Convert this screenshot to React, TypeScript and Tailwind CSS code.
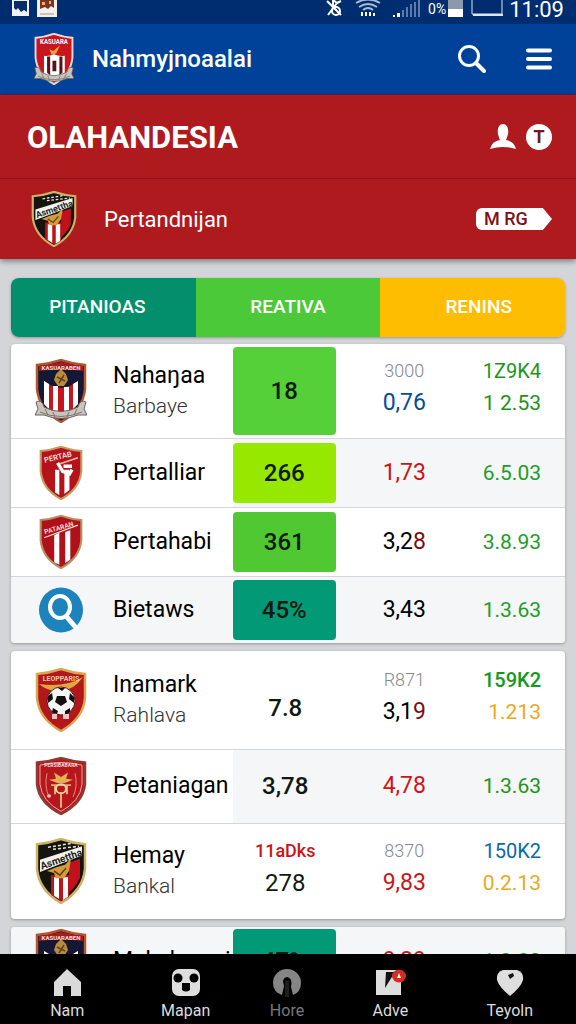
import type { ReactNode } from "react";

const SHIELD = "M2 6 Q14 5 26 1 Q38 5 50 6 L50 30 Q48 51 26 63 Q4 51 2 30 Z";

type CrestKind = "navy" | "header" | "black" | "sash" | "stripes" | "ball" | "eagle";

const crestFill: Record<CrestKind, string> = {
  navy: "#141834",
  header: "#c9151b",
  black: "#15140f",
  sash: "#b5121b",
  stripes: "#b01019",
  ball: "#b3161b",
  eagle: "#b8161d",
};

const crestEdge: Record<CrestKind, string> = {
  navy: "#b4552c",
  header: "#e9d9d2",
  black: "#cfb267",
  sash: "#c79a63",
  stripes: "#b59266",
  ball: "#d8a650",
  eagle: "#8f3b31",
};

function Ribbon() {
  return (
    <g>
      <path
        d="M1 43 Q7 40 9 48 Q26 57 43 48 Q45 40 51 43 L49 50 L52 56 L43 56 Q26 63 9 56 L0 56 L3 50 Z"
        fill="#c9c5bd"
        stroke="#68625d"
        strokeWidth="1"
      />
      <path d="M5 53 Q26 62 47 53 M10 50 L13 56 M18 53 L20 58 M34 53 L32 58 M42 50 L39 56" fill="none" stroke="#7b756f" strokeWidth="1" />
    </g>
  );
}

function CrestArt({ kind }: { kind: CrestKind }) {
  switch (kind) {
    case "navy":
      return (
        <>
          <path d="M4 7 Q14 6 26 3 Q38 6 48 7 L48 12 Q26 9 4 12 Z" fill="#a51c24" />
          <path d="M9 22 L17 27 L26 29 L35 27 L43 22 L43 45 Q37 53 26 58 Q15 53 9 45 Z" fill="#c8141d" />
          <path d="M9 22 L14 25 V50 L9 45 Z M18 27 H23 V56 L18 53 Z M29 28 H34 V53 L29 56 Z M38 25 L43 22 V45 L38 50 Z" fill="#fff" />
          <path d="M21 15 L26 10 L31 15 L33 21 L29 27 L23 27 L19 21 Z" fill="#b98b3c" />
          <path d="M22 18 L30 22 M24 24 L29 16" stroke="#60411b" strokeWidth="1.5" />
          <Ribbon />
          <text x="26" y="11" fontSize="6" fontWeight="700" textAnchor="middle" fill="#f3dedb">KASUARABEN</text>
        </>
      );
    case "header":
      return (
        <>
          <path d="M13 28 Q20 29 26 26 Q32 29 40 28 V50 Q34 55 26 58 Q18 55 13 50 Z" fill="#fff" />
          <path d="M17 29 H21 V52 L17 49 Z M24 34 H29 V47 H24 Z M33 29 H37 V49 L33 52 Z" fill="#5c1217" />
          <path d="M20 20 L25 22 L34 15 L29 25 L23 27 Z" fill="#e4a23a" />
          <Ribbon />
          <text x="26" y="14" fontSize="8" fontWeight="700" textAnchor="middle" fill="#fff">KASUARA</text>
        </>
      );
    case "black":
      return (
        <>
          <path d="M34 24 L45 20 V38 Q42 46 34 53 Z" fill="#c1121c" />
          <path d="M16 36 H34 V57 L26 61 L16 55 Z" fill="#c1121c" />
          <path d="M19 38 H24 V59 L19 56 Z M28 38 H33 V57 L28 60 Z" fill="#fff" />
          <path d="M12 32 L22 28 L30 26 L36 20 L34 32 L29 39 L21 39 L19 34 Z" fill="#d39b3e" />
          <path d="M19 32 L25 36 L31 29" stroke="#70410f" strokeWidth="1.5" fill="none" />
          <path d="M13 9 L38 5 M18 11 L44 8" stroke="#e9e7dc" strokeWidth="1.5" strokeDasharray="3 2" />
          <path d="M5 21 L47 8 V17 L5 33 Z" fill="#f3f3ee" />
          <text x="26" y="24" fontSize="10" fontWeight="700" textAnchor="middle" fill="#23251e" transform="rotate(-19 26 20)">Asmettha</text>
        </>
      );
    case "sash":
      return (
        <>
          <path d="M19 28 H24 V58 L19 55 Z M30 28 H36 V52 L30 57 Z" fill="#fff" />
          <path d="M22 20 L28 30 L36 33 L39 28 M29 24 H39" stroke="#fff" strokeWidth="4" fill="none" />
          <path d="M25 21 L46 14" stroke="#e8b9a3" strokeWidth="2" />
          <text x="23" y="16" fontSize="9" fontWeight="700" textAnchor="middle" fill="#f8d7d5" transform="rotate(-13 23 16)">PERTAB</text>
        </>
      );
    case "stripes":
      return (
        <>
          <path d="M18 24 L24 21 V59 L18 56 Z M31 20 L37 18 V53 L31 57 Z" fill="#fff" />
          <path d="M6 27 L46 12" stroke="#f6dfdc" strokeWidth="1.5" />
          <text x="24" y="18" fontSize="8" fontWeight="700" textAnchor="middle" fill="#f8d7d5" transform="rotate(-16 24 17)">PATARAN</text>
        </>
      );
    case "ball":
      return (
        <>
          <path d="M4 16 Q30 20 48 9 Q39 22 26 23 Q13 24 4 16 Z" fill="#e0a93f" />
          <circle cx="26" cy="33" r="14" fill="#f6f6f4" stroke="#4b1515" strokeWidth="1" />
          <path d="M22 28 H30 L32 34 L26 38 L20 34 Z M13 28 L17 25 L18 31 L13 35 Z M35 25 L39 29 L39 35 L34 31 Z M18 40 L23 43 L22 46 L17 44 Z M30 43 L35 40 L35 44 L30 47 Z M23 20 H30 L27 23 Z" fill="#111" />
          <path d="M17 46 H22 V51 H17 Z M28 46 H34 V51 H28 Z" fill="#f1c6c2" />
          <text x="26" y="13" fontSize="7" fontWeight="700" textAnchor="middle" fill="#f0c9a4">LEOPPARIS</text>
        </>
      );
    case "eagle":
      return (
        <>
          <path d="M5 9 Q26 3 47 9 V30 Q45 49 26 60 Q7 49 5 30 Z" fill="none" stroke="#e7b5ad" strokeWidth="1" />
          <path d="M12 18 Q9 32 14 44 M40 18 Q43 32 38 44" fill="none" stroke="#e78f81" strokeWidth="1" />
          <path d="M19 17 L26 22 L33 17 L31 24 L38 25 L29 29 H23 L14 25 L21 24 Z" fill="#e2b352" />
          <path d="M16 31 H36 M20 32 V41 M32 32 V41 M26 39 V56" stroke="#dcae7a" strokeWidth="2" />
          <circle cx="26" cy="35" r="5" fill="none" stroke="#efd39b" strokeWidth="2" />
          <circle cx="14" cy="43" r="2" fill="#f0c7c0" />
          <text x="26" y="11" fontSize="5" fontWeight="700" textAnchor="middle" fill="#f6dcd8">PERSIBABARA</text>
        </>
      );
  }
}

function Crest({ kind, className }: { kind: CrestKind; className: string }) {
  return (
    <svg viewBox="0 0 52 64" preserveAspectRatio="none" className={className} aria-hidden="true">
      <path d={SHIELD} fill={crestFill[kind]} stroke={crestEdge[kind]} strokeWidth="2.5" />
      <CrestArt kind={kind} />
    </svg>
  );
}

function SearchBadge() {
  return (
    <svg viewBox="0 0 44 46" className="h-[46px] w-11" aria-hidden="true">
      <ellipse cx="22" cy="23" rx="22" ry="22.5" fill="#1c83bc" />
      <ellipse cx="21" cy="20" rx="10" ry="11" fill="none" stroke="#fff" strokeWidth="4" />
      <path d="M27 29 L38 42" stroke="#fff" strokeWidth="5" />
    </svg>
  );
}

type Line = { text: string; tail?: string; tone: string };

type Row = {
  icon: ReactNode;
  name: string;
  sub?: string;
  height: string;
  rowBg?: string;
  nameBg?: string;
  tile?: string;
  value: string;
  note?: string;
  mid: Line[];
  end: Line[];
};

const small = "h-[54px] w-11";
const large = "h-16 w-13";

const first: Row[] = [
  {
    icon: <Crest kind="navy" className={large} />,
    name: "Nahaŋaa",
    sub: "Barbaye",
    height: "h-[94px]",
    tile: "h-[88px] bg-[#55d038]",
    value: "18",
    mid: [
      { text: "3000", tone: "text-[#85888c]" },
      { text: "0,76", tone: "text-[#064d98]" },
    ],
    end: [
      { text: "1Z9K4", tone: "text-[#1c9420]" },
      { text: "1 2.53", tone: "text-[#1c9420]" },
    ],
  },
  {
    icon: <Crest kind="sash" className={small} />,
    name: "Pertalliar",
    height: "h-[69px]",
    rowBg: "bg-[#f5f6f7]",
    nameBg: "bg-white",
    tile: "h-[60px] bg-[#97e800]",
    value: "266",
    mid: [{ text: "1,73", tone: "text-[#c9151a]" }],
    end: [{ text: "6.5.03", tone: "text-[#219d27]" }],
  },
  {
    icon: <Crest kind="stripes" className={small} />,
    name: "Pertahabi",
    height: "h-[69px]",
    tile: "h-[60px] bg-[#50c832]",
    value: "361",
    mid: [{ text: "3,2", tail: "8", tone: "text-black" }],
    end: [{ text: "3.8.93", tone: "text-[#219d27]" }],
  },
  {
    icon: <SearchBadge />,
    name: "Bietaws",
    height: "h-[67px]",
    rowBg: "bg-[#f5f6f7]",
    tile: "h-[60px] bg-[#029a76]",
    value: "45%",
    mid: [{ text: "3,43", tone: "text-black" }],
    end: [{ text: "1.3.63", tone: "text-[#219d27]" }],
  },
];

const second: Row[] = [
  {
    icon: <Crest kind="ball" className={large} />,
    name: "Inamark",
    sub: "Rahlava",
    height: "h-[98px]",
    value: "7.8",
    note: "",
    mid: [
      { text: "R871", tone: "text-[#85888c]" },
      { text: "3,1", tail: "9", tone: "text-black" },
    ],
    end: [
      { text: "159K2", tone: "font-medium text-[#129a1c]" },
      { text: "1.213", tone: "text-[#eda81c]" },
    ],
  },
  {
    icon: <Crest kind="eagle" className="h-[58px] w-13" />,
    name: "Petaniagan",
    height: "h-[74px]",
    rowBg: "bg-[#f5f6f7]",
    nameBg: "bg-white",
    value: "3,78",
    mid: [{ text: "4,78", tone: "text-[#cf1419]" }],
    end: [{ text: "1.3.63", tone: "text-[#1c9420]" }],
  },
  {
    icon: <Crest kind="black" className="h-[66px] w-13" />,
    name: "Hemay",
    sub: "Bankal",
    height: "h-24",
    value: "278",
    note: "11aDks",
    mid: [
      { text: "8370", tone: "text-[#85888c]" },
      { text: "9,83", tone: "text-[#c9151a]" },
    ],
    end: [
      { text: "150K2", tone: "text-[#0869ad]" },
      { text: "0.2.13", tone: "text-[#eda81c]" },
    ],
  },
];

const third: Row[] = [
  {
    icon: <Crest kind="navy" className={large} />,
    name: "Makahuwai",
    height: "h-[68px]",
    rowBg: "bg-[#f5f6f7]",
    tile: "h-16 bg-[#029a76]",
    value: "47%",
    mid: [{ text: "9,89", tone: "text-[#c9151a]" }],
    end: [{ text: "1.3.80", tone: "text-[#1c9420]" }],
  },
];

function Figures({ lines, size }: { lines: Line[]; size: string }) {
  return (
    <>
      {lines.map((line, i) => (
        <span
          key={i}
          className={`block leading-8 ${lines.length > 1 && i === 0 ? "" : size} ${line.tone}`}
        >
          {line.text}
          {line.tail && <span className="text-[#7a0d12]">{line.tail}</span>}
        </span>
      ))}
    </>
  );
}

function TeamTable({ rows, label }: { rows: Row[]; label: string }) {
  return (
    <div className="shrink-0 overflow-hidden rounded-sm bg-white shadow-[0_1px_3px_rgba(0,0,0,0.3)]">
      <table className="w-full table-fixed border-collapse" aria-label={label}>
        <colgroup>
          <col className="w-[40%]" />
          <col className="w-[19%]" />
          <col className="w-[24%]" />
          <col className="w-[17%]" />
        </colgroup>
        <tbody>
          {rows.map((row) => (
            <tr
              key={row.name}
              className={`border-b border-[#d5d6d9] last:border-b-0 ${row.height} ${row.rowBg ?? ""}`}
            >
              <th scope="row" className={`p-0 text-left font-normal ${row.nameBg ?? ""}`}>
                <div className="flex items-center gap-[26px] pl-6">
                  <span className="flex w-13 shrink-0 justify-center">{row.icon}</span>
                  <span>
                    <span className="block text-[23px] leading-[30px] text-black">{row.name}</span>
                    {row.sub && (
                      <span className="block text-[21px] leading-[30px] font-light text-[#333]">
                        {row.sub}
                      </span>
                    )}
                  </span>
                </div>
              </th>
              <td className="p-0 text-center text-2xl font-medium text-[#10190f]">
                {row.tile ? (
                  <div className={`mr-0.5 flex items-center justify-center rounded-sm ${row.tile}`}>
                    {row.value}
                  </div>
                ) : (
                  <div className={row.sub ? "pb-2" : ""}>
                    {row.note && (
                      <span className="block text-lg leading-8 text-[#c9151a]">{row.note}</span>
                    )}
                    <span
                      className={`block leading-8 ${row.note ? "font-normal" : ""} ${row.note === "" ? "pt-6" : ""}`}
                    >
                      {row.value}
                    </span>
                  </div>
                )}
              </td>
              <td className={`p-0 text-center text-lg font-light ${row.sub ? "pb-2" : ""}`}>
                <Figures lines={row.mid} size="text-[23px] font-normal" />
              </td>
              <td
                className={`p-0 pr-6 text-right text-xl whitespace-nowrap ${row.sub ? "pb-2" : ""}`}
              >
                <Figures lines={row.end} size="text-[21px]" />
              </td>
            </tr>
          ))}
        </tbody>
      </table>
    </div>
  );
}

function StatusBar() {
  return (
    <div className="flex h-6 shrink-0 items-start justify-between bg-[#002d70] pr-3 pl-3 text-white">
      <div className="flex gap-2">
        <svg viewBox="0 0 17 16" className="h-4 w-[17px]">
          <path d="M0 0 H17 V16 H0 Z" fill="#eef3f8" />
          <path d="M2 1 H15 V12 L12 10 L9 12 L6 8 L4 10 L2 8 Z" fill="#082f69" />
        </svg>
        <svg viewBox="0 0 20 17" className="h-[17px] w-5">
          <path d="M0 0 H20 V17 H0 Z" fill="#f4efe9" />
          <path d="M3 0 H17 V8 L14 6 L11 9 L8 7 L3 9 Z" fill="#7c3425" />
          <path d="M5 2 H8 V5 H5 Z M12 1 H14 V4 H12 Z" fill="#e4b36b" />
          <path d="M3 14 H17" stroke="#9b9b9b" />
        </svg>
      </div>
      <div className="flex items-start">
        <svg viewBox="0 0 18 17" className="mr-3 h-[17px] w-[18px]" fill="none" stroke="#fff" strokeWidth="2">
          <path d="M2 1 L16 15 M3 15 L12 3 L8 0 V8 M12 3 L16 1" />
          <circle cx="11" cy="11" r="4" />
        </svg>
        <svg viewBox="0 0 26 17" className="mr-3 h-[17px] w-[26px]" fill="none" stroke="#a9bbd6" strokeWidth="2">
          <path d="M1 3 Q13 -4 25 3 M4 7 Q13 1 22 7 M8 10 Q13 6 18 10" />
          <path d="M7 12 V16 M11 12 V16 M15 12 V16 M19 13 V16" stroke="#fff" />
        </svg>
        <svg viewBox="0 0 27 17" className="mr-2 h-[17px] w-[27px]">
          <path d="M0 15 H2 V17 H0 Z M4 13 H7 V17 H4 Z" fill="#fff" />
          <path d="M9 10 H11 V17 H9 Z M13 7 H15 V17 H13 Z M17 4 H19 V17 H17 Z M21 2 H23 V17 H21 Z M25 0 H27 V17 H25 Z" fill="#5d7aa8" />
        </svg>
        <span className="text-sm leading-[18px]">0%</span>
        <svg viewBox="0 0 15 17" className="ml-0.5 h-[17px] w-[15px]">
          <path d="M0 0 H15 V9 H0 Z" fill="#8c98ab" />
          <path d="M0 9 H15 V17 H0 Z" fill="#fff" />
        </svg>
        <svg viewBox="0 0 32 16" className="mr-1.5 ml-2 h-4 w-8" fill="none" stroke="#dce5f0">
          <path d="M1 0 V14 H31 V0" />
          <path d="M2 15 H32" strokeWidth="2" />
        </svg>
        <span className="text-[22px] leading-5">11:09</span>
      </div>
    </div>
  );
}

function NavLink({ label, dim, children }: { label: string; dim?: boolean; children: ReactNode }) {
  return (
    <a
      href="#"
      className={`flex flex-col items-center gap-1 text-base leading-5 ${dim ? "text-[#77797b]" : "text-[#dcdcdc]"}`}
    >
      {children}
      {label}
    </a>
  );
}

function BottomNav() {
  return (
    <nav className="grid h-[70px] shrink-0 grid-cols-[118fr_118fr_84fr_122fr_116fr] bg-black px-2 pt-[15px]">
      <NavLink label="Nam">
        <svg viewBox="0 0 28 28" className="size-7">
          <path d="M14 0 L28 13 V27 H18 V17 H10 V27 H1 V13 Z" fill="#dadada" />
        </svg>
      </NavLink>
      <NavLink label="Mapan">
        <svg viewBox="0 0 28 28" className="size-7">
          <rect width="28" height="27" rx="7" fill="#dedede" />
          <circle cx="6" cy="9" r="4.5" fill="#000" />
          <circle cx="22" cy="9" r="4.5" fill="#000" />
          <path d="M10 14 H18 V21 Q14 24 10 21 Z" fill="#000" />
        </svg>
      </NavLink>
      <NavLink label="Hore" dim>
        <svg viewBox="0 0 28 28" className="size-7">
          <path d="M9 26 Q0 23 0 14 A14 14 0 0 1 28 14 Q28 23 20 26 L18 18 Q20 9 14 8 Q8 9 11 17 Z" fill="#858585" />
          <path d="M12 12 H16 V28 H12 Z" fill="#1d1d1d" />
        </svg>
      </NavLink>
      <NavLink label="Adve">
        <svg viewBox="0 0 32 28" className="h-7 w-8">
          <path d="M2 1 H27 V26 H2 Z" fill="#dedede" />
          <path d="M12 3 H21 L11 19 Z" fill="#111" />
          <ellipse cx="25" cy="7" rx="7" ry="6.5" fill="#d52d22" />
          <path d="M25 4 L27 9 H23 Z" fill="#fff" />
        </svg>
      </NavLink>
      <NavLink label="Teyoln">
        <svg viewBox="0 0 28 28" className="size-7">
          <path d="M7 1 H21 Q28 3 27 11 Q25 18 14 27 Q3 18 1 11 Q0 3 7 1 Z" fill="#dedede" />
          <path d="M12 6 L17 4 L18 7 L14 10 Z" fill="#111" />
        </svg>
      </NavLink>
    </nav>
  );
}

export default function App() {
  return (
    <div className="flex h-screen flex-col overflow-hidden bg-[#d3d5d8] font-['Roboto',sans-serif]">
      <StatusBar />
      <header className="flex h-[71px] shrink-0 items-center border-b border-[#5b2356] bg-[#00419a] pr-6 pl-[34px] text-white">
        <Crest kind="header" className="h-[52px] w-10" />
        <span className="ml-[18px] flex-1 text-2xl font-medium">Nahmyjnoaalai</span>
        <button type="button" aria-label="Search" className="mr-10">
          <svg viewBox="0 0 28 28" className="size-7" fill="none" stroke="#fff">
            <circle cx="11" cy="11" r="9.5" strokeWidth="3" />
            <path d="M18 18 L26 26" strokeWidth="4" strokeLinecap="round" />
          </svg>
        </button>
        <button type="button" aria-label="Menu">
          <svg viewBox="0 0 26 24" className="h-6 w-[26px]">
            <path d="M2 3.5 H24 M2 12 H24 M2 20.5 H24" stroke="#fff" strokeWidth="4" strokeLinecap="round" />
          </svg>
        </button>
      </header>

      <section className="shrink-0 bg-[#ae1a1e] text-white shadow-[0_2px_6px_rgba(0,0,0,0.45)]">
        <div className="flex h-[84px] items-center border-b border-[#8d161b] pr-6 pl-[27px]">
          <h1 className="flex-1 pt-1 text-[31px] font-bold">OLAHANDESIA</h1>
          <button type="button" aria-label="Profile" className="mr-2.5">
            <svg viewBox="0 0 26 26" className="size-[26px]">
              <path
                d="M13 0 C17 0 19 5 18 10 Q17 14 16 16 Q24 17 26 25 Q13 21 0 25 Q2 17 10 16 Q9 14 8 10 C7 5 9 0 13 0 Z"
                fill="#fff"
              />
            </svg>
          </button>
          <button
            type="button"
            className="flex size-[26px] items-center justify-center rounded-full bg-white text-lg font-bold text-[#74191b]"
          >
            T
          </button>
        </div>
        <div className="flex h-20 items-center pr-6 pl-[31px]">
          <Crest kind="black" className="h-14 w-[46px]" />
          <span className="ml-[27px] flex-1 text-[22px]">Pertandnijan</span>
          <button
            type="button"
            className="flex h-[22px] w-[76px] items-center rounded-l-md bg-white pl-2 text-lg font-medium text-[#7c1218] [clip-path:polygon(0_0,88%_0,100%_50%,88%_100%,0_100%)]"
          >
            M RG
          </button>
        </div>
      </section>

      <main className="flex min-h-0 flex-1 flex-col overflow-y-auto px-[11px] pt-[19px] [scrollbar-width:none]">
        <div className="mb-[7px] grid h-[59px] shrink-0 grid-cols-3 overflow-hidden rounded-lg text-[19px] font-medium text-white shadow-[0_1px_3px_rgba(0,0,0,0.3)]">
          <button type="button" className="bg-[#048f6c] pr-3">PITANIOAS</button>
          <button type="button" className="bg-[#4cc939]">REATIVA</button>
          <button type="button" className="bg-[#ffbd02] pl-3">RENINS</button>
        </div>
        <div className="flex flex-col gap-2">
          <TeamTable rows={first} label="Teams" />
          <TeamTable rows={second} label="Results" />
          <TeamTable rows={third} label="More teams" />
        </div>
      </main>

      <BottomNav />
    </div>
  );
}
